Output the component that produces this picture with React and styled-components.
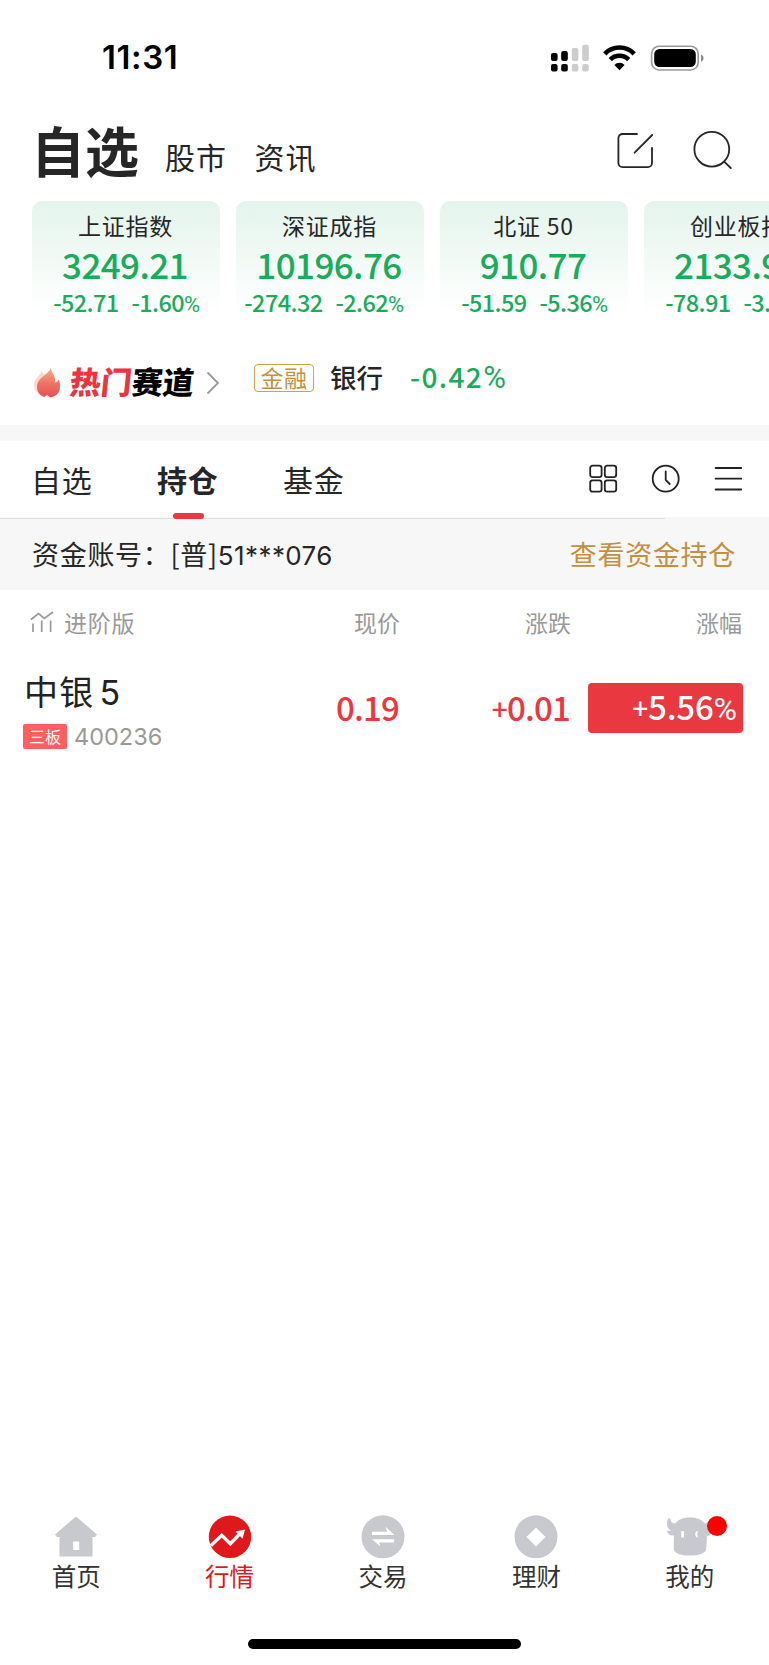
import React from 'react';
import styled, { createGlobalStyle } from 'styled-components';

const indices = [
  { name: '上证指数', value: '3249.21', change: '-52.71', rate: '-1.60' },
  { name: '深证成指', value: '10196.76', change: '-274.32', rate: '-2.62' },
  { name: '北证 50', value: '910.77', change: '-51.59', rate: '-5.36' },
  { name: '创业板指', value: '2133.93', change: '-78.91', rate: '-3.57' },
];

const GRAY = '#c8c9cf';

function StatusBar() {
  return (
    <StatusContainer>
      <Clock>11:31</Clock>
      <svg width="160" height="32" viewBox="0 0 160 32">
        <g>
          <rect x="2" y="12" width="6.6" height="8" rx="2" />
          <rect x="12.2" y="10" width="6.6" height="10" rx="2" />
          <rect x="2" y="23" width="6.6" height="7.6" rx="2" />
          <rect x="12.2" y="23" width="6.6" height="7.6" rx="2" />
          <g fill="#cccccc">
            <rect x="22.8" y="7" width="6.6" height="13" rx="2" />
            <rect x="33.2" y="3.8" width="6.6" height="16.2" rx="2" />
            <rect x="22.8" y="23" width="6.6" height="7.6" rx="2" />
            <rect x="33.2" y="23" width="6.6" height="7.6" rx="2" />
          </g>
        </g>
        <g fill="none" stroke="#000" strokeWidth="4.6">
          <path d="M55.8 12.8a20.4 20.4 0 0 1 29.4 0" />
          <path d="M61.3 18.6a13 13 0 0 1 18.4 0" />
        </g>
        <path d="M65.4 24a7 7 0 0 1 10.2 0L70.5 29.2Z" />
        <rect x="102.6" y="5.2" width="46.6" height="23.8" rx="7.6" fill="none" stroke="#999" strokeWidth="1.6" />
        <rect x="105.2" y="8" width="41.6" height="18" rx="5.4" />
        <path d="M152 13.4c3.4 1.4 3.4 6 0 7.4Z" fill="#888" />
      </svg>
    </StatusContainer>
  );
}

function Header() {
  return (
    <HeaderContainer>
      <h1>自选</h1>
      <HeaderLink>股市</HeaderLink>
      <HeaderLink>资讯</HeaderLink>
      <svg width="120" height="44" viewBox="0 0 120 44" fill="none" stroke="#262626" strokeWidth="1.8" strokeLinecap="round">
        <path d="M24 6H9.6a4.2 4.2 0 0 0-4.2 4.2V35a4.2 4.2 0 0 0 4.2 4.2h25.2a4.2 4.2 0 0 0 4.2-4.2V19.8M21.6 24.7 39.2 7" />
        <circle cx="98.8" cy="21.2" r="17.4" />
        <path d="m111.4 33.8 6.4 6.2" />
      </svg>
    </HeaderContainer>
  );
}

function IndexCard({ name, value, change, rate }) {
  return (
    <Card>
      <CardName>{name}</CardName>
      <CardValue>{value}</CardValue>
      <CardChange>
        <span>{change}</span>
        <span>
          {rate}
          <Percent $size={22}>%</Percent>
        </span>
      </CardChange>
    </Card>
  );
}

function HotTrack() {
  return (
    <HotContainer>
      <svg width="28" height="32" viewBox="0 0 28 32">
        <defs>
          <linearGradient id="flame" x1="0" y1="0" x2="0" y2="1">
            <stop offset="0" stopColor="#fbb08c" />
            <stop offset="0.5" stopColor="#ee7666" />
            <stop offset="1" stopColor="#e84f55" />
          </linearGradient>
        </defs>
        <path d="M8 3C9 8 1 11 1 18c0 5 3 8.5 8 9.5l6-4V9C12 8 9 7 8 3Z" fill="#fbd8ce" />
        <path d="M17.500 1c-1 6-13 9-13.500 18-.3 6 3 9.500 7 11l3-2 3 2.500c6-.6 10-5 10-11 0-3-.5-5-1.200-7-.8 2-2.300 3-3.800 3C23.500 10 19 7 17.500 1Z" fill="url(#flame)" />
      </svg>
      <HotTitle>
        <em>热门</em>赛道
      </HotTitle>
      <svg width="14" height="24" viewBox="0 0 14 24" fill="none" stroke="#999" strokeWidth="1.8">
        <path d="M1.5 1.5 12 12 1.5 22.5" />
      </svg>
      <Sector>
        <SectorTag>金融</SectorTag>
        <SectorName>银行</SectorName>
        <SectorRate>
          -0.42<Percent $size={31}>%</Percent>
        </SectorRate>
      </Sector>
    </HotContainer>
  );
}

function TabBar() {
  return (
    <Tabs>
      <Tab>自选</Tab>
      <Tab $active>持仓</Tab>
      <Tab>基金</Tab>
      <svg width="154" height="30" viewBox="0 0 154 30" fill="none" stroke="#222" strokeWidth="1.8" strokeLinecap="round">
        <rect x="1.2" y="1.7" width="11.4" height="11.4" rx="2.4" />
        <rect x="15.8" y="1.7" width="11.4" height="11.4" rx="2.4" />
        <rect x="1.2" y="16.3" width="11.4" height="11.4" rx="2.4" />
        <rect x="15.8" y="16.3" width="11.4" height="11.4" rx="2.4" />
        <circle cx="76.7" cy="14.7" r="13" />
        <path d="M76.7 7.5V16l4 4M126.6 4h25.6M126.6 14.7h25.6M126.6 25.5h25.6" />
      </svg>
    </Tabs>
  );
}

function Holdings() {
  return (
    <Table>
      <Row $header>
        <Advanced>
          <svg width="24" height="22" viewBox="0 0 24 22" fill="none" stroke="#999" strokeWidth="1.7">
            <path d="m1 8.500 7.500-6 5.800 5L23 1M3 12.500V21M11.700 9.500V21M20.600 9.500V21" />
          </svg>
          进阶版
        </Advanced>
        <Column>现价</Column>
        <Column>涨跌</Column>
        <Column>涨幅</Column>
      </Row>
      <Row>
        <Stock>
          <StockName>
            中银<span>5</span>
          </StockName>
          <StockCode>
            <Board>三板</Board>400236
          </StockCode>
        </Stock>
        <Price>0.19</Price>
        <Price>
          <Sign>+</Sign>0.01
        </Price>
        <RateBox>
          <Sign>+</Sign>5.56<Percent $size={32}>%</Percent>
        </RateBox>
      </Row>
    </Table>
  );
}

const navItems = [
  {
    label: '首页',
    icon: (
      <>
        <path d="M22 2.500 1 20.500l2 2.500h2.500v19.500h33V23H41l2-2.500Z" fill={GRAY} />
        <path d="M19.200 27.500h6v8.500h-6Z" fill="#fff" />
      </>
    ),
  },
  {
    label: '行情',
    active: true,
    icon: (
      <>
        <circle cx="22" cy="22.8" r="21.2" fill="#de181b" />
        <path d="m3 31.500 10.700-10.200 8.600 8.500 11-11.500" fill="none" stroke="#fff" strokeWidth="3.4" />
        <path d="m27.500 17.500 9.500-2-2.500 9.200Z" fill="#fff" />
      </>
    ),
  },
  {
    label: '交易',
    icon: (
      <>
        <circle cx="22" cy="22.8" r="21.5" fill={GRAY} />
        <path d="M11 17.800h15l-1.500-5 9 8.300H11ZM33.200 25.200H11l8.500 7.300-1.500-4H33.200Z" fill="#fff" />
      </>
    ),
  },
  {
    label: '理财',
    icon: (
      <>
        <circle cx="22" cy="22.8" r="21.5" fill={GRAY} />
        <path d="m22 13.500 9.600 9.500L22 32.500 12.400 23Z" fill="#fff" />
      </>
    ),
  },
  {
    label: '我的',
    badge: true,
    icon: (
      <>
        <path
          d="M7 9.500C11 5 16 3.500 22 3.500s11 1.500 15 6c3-.5 4.500-2 5-4.500 3 6 .5 10-3 11.500h5c-.5 4-2.500 5.500-5.200 5.500 0 5-.3 9-.8 14-1 3.500-7 5.500-16 5.500S7 39.500 6 36c-.5-3-.2-9 0-14.500-4 .5-6.500-1-7-4.700h4.500C-.5 15-2.500 10 0 5c.6-1.500 2-1.500 2.300 0 .5 3 2 4.500 4.700 4.500Z"
          fill={GRAY}
        />
        <path d="M13.200 17H16v6.500h-2.800ZM30.200 17c-4 .3-4 6.200 0 6.500-1.200-2-1.200-4.500 0-6.500Z" fill="#fff" />
      </>
    ),
  },
];

function BottomNav() {
  return (
    <NavContainer>
      {navItems.map((item) => (
        <NavItem key={item.label} $active={item.active}>
          <svg width="44" height="46" viewBox="0 0 44 46">
            {item.icon}
          </svg>
          {item.label}
          {item.badge && <Badge />}
        </NavItem>
      ))}
    </NavContainer>
  );
}

function App() {
  return (
    <Screen>
      <GlobalStyle />
      <StatusBar />
      <Header />
      <CardList>
        {indices.map((item) => (
          <IndexCard key={item.name} {...item} />
        ))}
      </CardList>
      <HotTrack />
      <Divider />
      <TabBar />
      <Account>
        <span>
          资金账号：[普]<b>51***076</b>
        </span>
        <a>查看资金持仓</a>
      </Account>
      <Holdings />
      <BottomNav />
      <HomeIndicator />
    </Screen>
  );
}

const GlobalStyle = createGlobalStyle`
  body {
    margin: 0;
    background: #ffffff;
  }

  * {
    box-sizing: border-box;
  }

  svg {
    display: block;
    flex-shrink: 0;
    overflow: visible;
  }
`;

const Screen = styled.main`
  display: flex;
  flex-direction: column;
  width: 769px;
  height: 1665px;
  overflow: hidden;
  font-family: 'Noto Sans CJK SC', sans-serif;
  color: #262626;
  white-space: nowrap;
`;

const Percent = styled.small`
  font-family: Roboto, sans-serif;
  font-size: ${({ $size }) => $size}px;
  font-weight: 400;
  line-height: 1;
  letter-spacing: 0;
`;

const Sign = styled.small`
  font-size: 28px;
  line-height: 1;
  vertical-align: 1px;
`;

const StatusContainer = styled.div`
  display: flex;
  align-items: center;
  justify-content: space-between;
  height: 115px;
  padding: 0 60px 2px 102px;
`;

const Clock = styled.div`
  font-family: Inter, sans-serif;
  font-size: 33px;
  font-weight: 600;
  letter-spacing: 0.6px;
  color: #000000;
`;

const HeaderContainer = styled.header`
  display: flex;
  height: 86px;
  padding: 0 36px 0 31px;

  h1 {
    width: 134px;
    margin: 0;
    font-size: 54px;
    font-weight: 700;
    line-height: 69px;
  }

  svg {
    margin: 13px 0 0 auto;
  }
`;

const HeaderLink = styled.span`
  width: 89.5px;
  font-size: 30px;
  line-height: 82px;
  letter-spacing: 1px;
`;

const CardList = styled.section`
  display: flex;
  gap: 16px;
  height: 144px;
  padding-left: 31.5px;
`;

const Card = styled.div`
  flex: 0 0 188px;
  height: 125px;
  padding-top: 7px;
  border-radius: 10px;
  background: linear-gradient(#e4f4ec, #ffffff 90%);
  text-align: center;
  color: #1aab5c;
`;

const CardName = styled.div`
  font-size: 23px;
  line-height: 34px;
  letter-spacing: 0.8px;
  color: #262626;
`;

const CardValue = styled.div`
  padding-right: 1px;
  font-size: 35px;
  font-weight: 500;
  line-height: 43px;
  letter-spacing: -0.6px;
`;

const CardChange = styled.div`
  display: grid;
  grid-template-columns: 87px 1fr;
  gap: 13px;
  font-size: 23.5px;
  font-weight: 500;
  line-height: 35px;
  letter-spacing: -0.6px;

  span {
    display: flex;
    align-items: baseline;
  }

  span:first-child {
    justify-content: flex-end;
  }
`;

const HotContainer = styled.section`
  display: flex;
  align-items: center;
  height: 80px;
  padding: 0 0 5px 33px;
`;

const HotTitle = styled.strong`
  width: 136px;
  margin-left: 9px;
  font-size: 31px;
  font-weight: 900;
  line-height: 44px;
  transform: translateY(-2px) skewX(-6deg);
  color: #000000;

  em {
    font-style: normal;
    color: #ea3540;
  }
`;

const Sector = styled.div`
  display: flex;
  align-items: center;
  margin: -9px 0 0 34px;
`;

const SectorTag = styled.span`
  width: 60px;
  height: 28px;
  border: 1.5px solid #d0a050;
  border-radius: 4px;
  font-size: 23px;
  line-height: 24px;
  letter-spacing: 0.5px;
  text-align: center;
  color: #c48f40;
`;

const SectorName = styled.span`
  width: 79px;
  margin: -3px 0 0 16px;
  font-size: 26.5px;
  font-weight: 500;
`;

const SectorRate = styled.span`
  margin: -4px 0 0 1px;
  font-size: 28px;
  font-weight: 500;
  letter-spacing: 1.4px;
  color: #1aab5c;
`;

const Divider = styled.div`
  height: 16px;
  background: #f7f7f7;
`;

const Tabs = styled.nav`
  display: flex;
  align-items: center;
  position: relative;
  height: 76px;
  padding-left: 31px;

  svg {
    margin: 0 26px 0 auto;
  }

  &::after {
    content: '';
    position: absolute;
    left: 0;
    bottom: -2px;
    width: 665px;
    height: 1px;
    background: #dfdfdf;
  }
`;

const Tab = styled.div`
  position: relative;
  width: 126px;
  font-size: 30px;
  font-weight: ${({ $active }) => ($active ? 700 : 400)};
  letter-spacing: 0.8px;

  &::after {
    content: '';
    display: ${({ $active }) => ($active ? 'block' : 'none')};
    position: absolute;
    z-index: 1;
    left: 16px;
    bottom: -18px;
    width: 31px;
    height: 6px;
    border-radius: 3px;
    background: #e93840;
  }
`;

const Account = styled.div`
  display: flex;
  align-items: center;
  justify-content: space-between;
  height: 73px;
  padding: 0 33px 1px 32px;
  background: #f7f7f7;
  font-size: 27px;
  letter-spacing: 0.7px;

  b {
    font-family: Inter, sans-serif;
    font-size: 26px;
    font-weight: 400;
    letter-spacing: 0.4px;
  }

  a {
    color: #c48f40;
  }
`;

const Table = styled.section`
  flex: 1;
`;

const Row = styled.div`
  display: grid;
  grid-template-columns: 230px 171px 171px 171px;
  align-items: center;
  height: ${({ $header }) => ($header ? '63px' : '109px')};
`;

const Advanced = styled.div`
  display: flex;
  align-items: center;
  gap: 10px;
  padding-left: 30px;
  font-size: 23px;
  letter-spacing: 0.8px;
  color: #999999;
`;

const Column = styled.div`
  padding-right: 1px;
  font-size: 23px;
  text-align: right;
  color: #999999;
`;

const Stock = styled.div`
  padding: 2px 0 0 23px;
`;

const StockName = styled.div`
  padding-left: 1px;
  font-size: 34px;
  line-height: 44px;
  letter-spacing: 1.2px;
  color: #222222;

  span {
    margin-left: 5px;
    font-family: Inter, sans-serif;
  }
`;

const StockCode = styled.div`
  display: flex;
  align-items: center;
  gap: 7px;
  margin-top: 9px;
  font-family: Inter, sans-serif;
  font-size: 23.5px;
  line-height: 25px;
  color: #999999;
`;

const Board = styled.span`
  width: 44px;
  border-radius: 2px;
  background: #ff5f61;
  font-family: 'Noto Sans CJK SC', sans-serif;
  font-size: 16px;
  text-align: center;
  color: #ffffff;
`;

const Price = styled.div`
  padding-right: 2px;
  font-size: 33px;
  font-weight: 500;
  line-height: 47px;
  letter-spacing: -0.8px;
  text-align: right;
  color: #e93840;
`;

const RateBox = styled(Price)`
  height: 50px;
  margin-left: 16px;
  padding-right: 6px;
  border-radius: 4px;
  background: #e93840;
  letter-spacing: -0.2px;
  color: #ffffff;
`;

const NavContainer = styled.nav`
  display: flex;
  height: 125px;
  padding-right: 2px;
`;

const NavItem = styled.div`
  display: flex;
  flex-direction: column;
  align-items: center;
  position: relative;
  flex: 1;
  padding-right: 1px;
  font-size: 24.5px;
  line-height: 32px;
  color: ${({ $active }) => ($active ? '#de181b' : '#333333')};
`;

const Badge = styled.i`
  position: absolute;
  left: 93px;
  top: 2px;
  width: 20px;
  height: 20px;
  border-radius: 50%;
  background: #ff0000;
`;

const HomeIndicator = styled.div`
  width: 273px;
  height: 10px;
  margin: 0 auto 16px;
  border-radius: 5px;
  background: #000000;
`;

export default App;
